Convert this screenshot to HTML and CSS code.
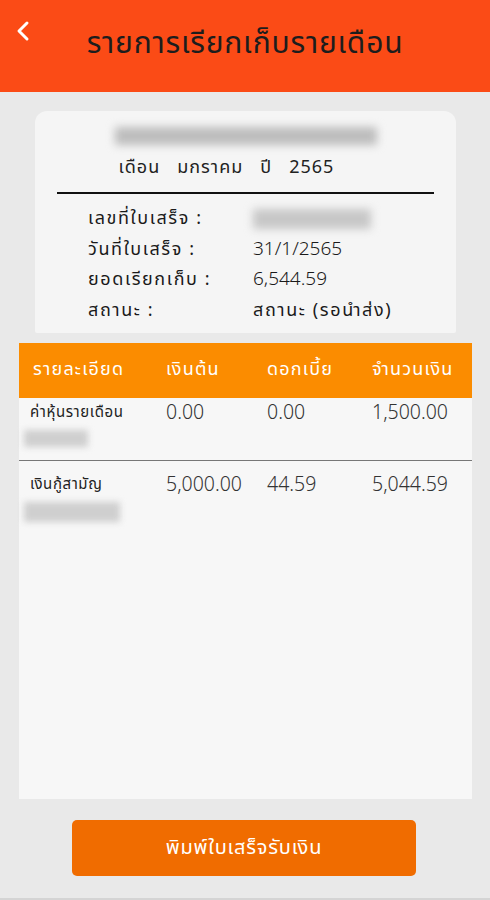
FILE: index.html
```html
<!DOCTYPE html>
<html lang="th">
<head>
  <meta charset="UTF-8" />
  <title>รายการเรียกเก็บรายเดือน</title>
  <meta name="viewport" content="width=device-width, initial-scale=1.0" />
  <link rel="stylesheet" href="styles.css">
</head>
<body>

<div class="topbar">
  <button class="back" aria-label="back">
    <svg width="14" height="22" viewBox="0 0 14 22"><path d="M11 3 L3 11 L11 19" fill="none" stroke="#fff" stroke-width="3" stroke-linecap="round" stroke-linejoin="round"/></svg>
  </button>
  <h1>รายการเรียกเก็บรายเดือน</h1>
</div>

<div class="page">
  <div class="summary">
    <div class="blur blur-name"></div>
    <div class="month">เดือน&nbsp;&nbsp; มกราคม&nbsp;&nbsp; ปี&nbsp;&nbsp; 2565</div>
    <hr class="rule" />
    <div class="info">
      <span class="lbl">เลขที่ใบเสร็จ :</span><span><i class="blur blur-no"></i></span>
      <span class="lbl">วันที่ใบเสร็จ :</span><span>31/1/2565</span>
      <span class="lbl">ยอดเรียกเก็บ :</span><span>6,544.59</span>
      <span class="lbl">สถานะ :</span><span class="lbl">สถานะ (รอนำส่ง)</span>
    </div>
  </div>

  <div class="table">
    <div class="row head">
      <span>รายละเอียด</span>
      <span>เงินต้น</span>
      <span>ดอกเบี้ย</span>
      <span>จำนวนเงิน</span>
    </div>
    <div class="row item first">
      <div class="desc">ค่าหุ้นรายเดือน<i class="blur blur-sub short"></i></div>
      <span>0.00</span>
      <span>0.00</span>
      <span>1,500.00</span>
    </div>
    <div class="row item">
      <div class="desc">เงินกู้สามัญ<i class="blur blur-sub"></i></div>
      <span>5,000.00</span>
      <span>44.59</span>
      <span>5,044.59</span>
    </div>
  </div>

  <div class="actions">
    <button class="print">พิมพ์ใบเสร็จรับเงิน</button>
  </div>
</div>

</body>
</html>
```

FILE: styles.css
```css
body, html {
  margin: 0;
  padding: 0;
  height: 100%;
  font-family: "Noto Sans Thai", "Noto Sans", "Liberation Sans", sans-serif;
  background: #e9e9e9;
  color: #222;
}

body {
  box-sizing: border-box;
  border-bottom: 2px solid #d4d4d4;
}

.topbar {
  height: 92px;
  background: #fb4b16;
  position: relative;
  display: flex;
  align-items: center;
  justify-content: center;
}

.topbar h1 {
  margin: 0 0 4px 0;
  font-size: 30px;
  font-weight: 400;
  letter-spacing: 0.8px;
  color: #1d1d1d;
}

.back {
  position: absolute;
  left: 16px;
  top: 20px;
  background: none;
  border: none;
  padding: 0;
}

.page {
  padding: 19px 18px 0 19px;
}

.summary {
  background: #f5f5f5;
  margin: 0 16px 10px;
  border-radius: 12px 12px 2px 2px;
  padding: 13px 22px 7px;
  text-align: center;
}

.blur {
  display: block;
  background: #bdbdbd;
  filter: blur(4px);
}

.blur-name {
  width: 262px;
  height: 18px;
  margin: 3px auto 0;
}

.month {
  font-size: 18px;
  letter-spacing: 1px;
  margin-top: 9px;
  padding-right: 38px;
}

.rule {
  border: none;
  border-top: 2px solid #111;
  margin: 11px 0 10px;
}

.info {
  display: grid;
  grid-template-columns: 165px 1fr;
  text-align: left;
  padding-left: 31px;
  font-size: 19px;
  font-weight: 300;
  line-height: 30.5px;
  color: #1a1a1a;
}

.lbl {
  font-size: 18px;
  font-weight: 400;
  letter-spacing: 1.6px;
}

.blur-no {
  width: 118px;
  height: 20px;
  margin-top: 5px;
  background: #c7c7c7;
}

.table {
  background: #f7f7f7;
  height: 456px;
}

.row {
  display: grid;
  grid-template-columns: 133px 101px 105px 1fr;
  padding: 0 0 0 14px;
}

.row.head {
  background: #fb8c00;
  color: #fff;
  height: 55px;
  align-items: center;
  font-size: 18px;
  letter-spacing: 1.2px;
  padding-bottom: 2px;
  box-sizing: border-box;
}

.row.item {
  height: 62px;
  font-size: 19.5px;
  font-weight: 300;
  color: #333;
  padding-top: 1px;
  box-sizing: border-box;
}

.row.item + .row.item {
  border-top: 1px solid #777;
  padding-top: 10px;
}

.row.item span {
  line-height: 28px;
}

.desc {
  font-size: 15px;
  font-weight: 400;
  letter-spacing: 0.6px;
  line-height: 28px;
  margin-left: -3px;
  color: #222;
}

.blur-sub {
  width: 88px;
  height: 17px;
  margin: 3px 0 0 -6px;
  background: #cfcfcf;
  filter: blur(3px);
}

.row.item + .row.item .blur-sub {
  width: 96px;
  height: 20px;
}

.blur-sub.short {
  width: 64px;
}

.actions {
  text-align: center;
  padding: 21px 0 0;
}

.print {
  width: 344px;
  height: 56px;
  margin-left: -3px;
  background: #f06c00;
  color: #fff;
  border: none;
  border-radius: 5px;
  font-family: inherit;
  font-size: 20px;
  letter-spacing: 0.8px;
}
```
